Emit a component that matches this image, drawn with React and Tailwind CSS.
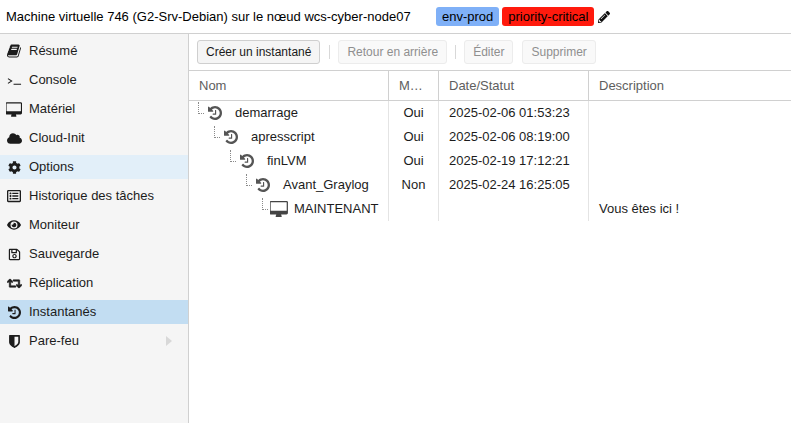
import React from 'react';
import { FaCloud, FaCog, FaRegListAlt, FaEye, FaRegSave, FaRetweet, FaPencilAlt } from 'react-icons/fa';

const historyPath = 'M1664 896q0 156-61 298t-164 245-245 164-298 61q-172 0-327-72.5t-264-204.5q-7-10-6.5-22.5t8.5-20.5l137-138q10-9 25-9 16 2 23 12 73 95 179 147t225 52q104 0 198.5-40.5t163.5-109.5 109.5-163.5 40.5-198.5-40.5-198.5-109.5-163.5-163.5-109.5-198.5-40.5q-98 0-188 35.5t-160 101.5l137 138q31 30 14 69-17 40-59 40h-448q-26 0-45-19t-19-45v-448q0-42 40-59 39-17 69 14l130 129q107-101 244.5-156.5t284.5-55.5q156 0 298 61t245 164 164 245 61 298zm-640-288v448q0 14-9 23t-23 9h-320q-14 0-23-9t-9-23v-64q0-14 9-23t23-9h224v-352q0-14 9-23t23-9h64q14 0 23 9t9 23z';
const shieldPath = 'M1344 960v-640h-448v1137q119-63 213-137 235-184 235-360zm192-768v768q0 86-33.5 170.5t-83 150-118 127.5-126.5 103-121 77.5-89.5 49.5-42.5 20q-12 6-26 6t-26-6q-16-7-42.5-20t-89.5-49.5-121-77.5-126.5-103-118-127.5-83-150-33.5-170.5v-768q0-26 19-45t45-19h1152q26 0 45 19t19 45z';
const bookPath = 'M1703 478q40 57 18 129l-275 906q-19 64-76.5 107.5t-122.5 43.5h-923q-77 0-148.5-53.5t-99.5-131.5q-24-67-2-127 0-4 3-27t4-37q1-8-3-21.5t-3-19.5q2-11 8-21t16.5-23.5 16.5-23.5q23-38 45-91.5t30-91.5q3-10 .5-30t-.5-28q3-11 17-28t17-23q21-36 42-92t25-90q1-9-2.5-32t.5-28q4-13 22-30.5t22-22.5q19-26 42.5-84.5t27.5-96.5q1-8-3-25.5t-2-26.5q2-8 9-18t18-23 17-21q8-12 16.5-30.5t15-35 16-36 19.5-32 26.5-23.5 36-11.5 47.5 5.5l-1 3q38-9 51-9h761q74 0 114 56t18 130l-274 906q-36 119-71.5 153.5t-128.5 34.5h-869q-27 0-38 15-11 16-1 43 24 70 144 70h923q29 0 56-15.5t35-41.5l300-987q7-22 5-57 38 15 59 43zm-1064 2q-4 13 2 22.5t20 9.5h608q13 0 25.5-9.5t16.5-22.5l21-64q4-13-2-22.5t-20-9.5h-608q-13 0-25.5 9.5t-16.5 22.5zm-83 256q-4 13 2 22.5t20 9.5h608q13 0 25.5-9.5t16.5-22.5l21-64q4-13-2-22.5t-20-9.5h-608q-13 0-25.5 9.5t-16.5 22.5z';
const desktopPath = 'M1728 992v-832q0-13-9.5-22.5t-22.5-9.5h-1600q-13 0-22.5 9.5t-9.5 22.5v832q0 13 9.5 22.5t22.5 9.5h1600q13 0 22.5-9.5t9.5-22.5zm128-832v1088q0 66-47 113t-113 47h-544q0 37 16 77.5t32 71 16 43.5q0 26-19 45t-45 19h-512q-26 0-45-19t-19-45q0-14 16-44t32-70 16-78h-544q-66 0-113-47t-47-113v-1088q0-66 47-113t113-47h1632q66 0 113 47t47 113z';

const HistoryIcon = ({ className }) => (
  <svg className={className} viewBox="128 128 1536 1536" fill="currentColor"><path d={historyPath} /></svg>
);
const ShieldIcon = ({ className }) => (
  <svg className={className} viewBox="128 128 1536 1536" fill="currentColor"><path d={shieldPath} /></svg>
);
const BookIcon = ({ className }) => (
  <svg className={className} viewBox="64 64 1664 1664" fill="currentColor"><path d={bookPath} /></svg>
);
const DesktopIcon = ({ className }) => (
  <svg className={className} viewBox="0 0 1856 1664" fill="currentColor"><path d={desktopPath} /></svg>
);
const ConsoleIcon = ({ className }) => (
  <svg className={className} viewBox="0 0 16 16" fill="none" stroke="currentColor" strokeWidth="1.1">
    <path d="M1 6l4 2.5L1 11" />
    <path d="M7 12h8" />
  </svg>
);

const menuItems = [
  { label: 'Résumé', icon: BookIcon, rowClass: '', iconClass: 'w-[14px] h-[14px]' },
  { label: 'Console', icon: ConsoleIcon, rowClass: '', iconClass: 'w-[15px] h-[15px]' },
  { label: 'Matériel', icon: DesktopIcon, rowClass: '', iconClass: 'w-[16px] h-[15px]' },
  { label: 'Cloud-Init', icon: FaCloud, rowClass: '', iconClass: 'w-[15px] h-[15px]' },
  { label: 'Options', icon: FaCog, rowClass: 'bg-[#e2eff9]', iconClass: 'w-[13px] h-[13px]' },
  { label: 'Historique des tâches', icon: FaRegListAlt, rowClass: '', iconClass: 'w-[14px] h-[14px]' },
  { label: 'Moniteur', icon: FaEye, rowClass: '', iconClass: 'w-[14px] h-[14px]' },
  { label: 'Sauvegarde', icon: FaRegSave, rowClass: '', iconClass: 'w-[13px] h-[13px]' },
  { label: 'Réplication', icon: FaRetweet, rowClass: '', iconClass: 'w-[15px] h-[15px] stroke-[24]' },
  { label: 'Instantanés', icon: HistoryIcon, rowClass: 'bg-[#c2ddf2]', iconClass: 'w-[13px] h-[13px]' },
  { label: 'Pare-feu', icon: ShieldIcon, rowClass: '', iconClass: 'w-[13px] h-[13px]', arrow: true }
];

const snapshots = [
  { name: 'demarrage', indent: 'pl-[9px]', ram: 'Oui', date: '2025-02-06 01:53:23', desc: '' },
  { name: 'apresscript', indent: 'pl-[25px]', ram: 'Oui', date: '2025-02-06 08:19:00', desc: '' },
  { name: 'finLVM', indent: 'pl-[41px]', ram: 'Oui', date: '2025-02-19 17:12:21', desc: '' },
  { name: 'Avant_Graylog', indent: 'pl-[57px]', ram: 'Non', date: '2025-02-24 16:25:05', desc: '' },
  { name: 'MAINTENANT', indent: 'pl-[73px]', ram: '', date: '', desc: 'Vous êtes ici !', current: true }
];

const ToolButton = ({ children, disabled }) => (
  <button
    className={
      disabled
        ? 'h-[24px] px-[8px] rounded-[3px] border border-[#ececec] bg-[#f9f9f9] text-[#8f8f8f] text-[12px]'
        : 'h-[24px] px-[8px] rounded-[3px] border border-[#cfcfcf] bg-[#f5f5f5] text-[#1a1a1a] text-[12px]'
    }
  >
    {children}
  </button>
);

const TreeLine = () => (
  <span className="w-[6px] h-[12px] -mt-[11px] mr-[4px] border-l border-b border-dotted border-[#8a8a8a] shrink-0" />
);

const App = () => {
  return (
    <div className="w-[791px] h-[423px] overflow-hidden bg-white flex flex-col font-['Liberation_Sans',Arial,sans-serif] text-[13px] text-[#1c1c1c]">
      <header className="h-[34px] shrink-0 border-b border-[#d0d0d0] flex items-center pl-[6px]">
        <span className="text-[13px] text-black w-[430px]">Machine virtuelle 746 (G2-Srv-Debian) sur le nœud wcs-cyber-node07</span>
        <span className="h-[19px] px-[6px] rounded-[3px] bg-[#7fb0f7] text-black text-[13px] leading-[19px]">env-prod</span>
        <span className="h-[19px] ml-[3px] px-[6px] rounded-[3px] bg-[#ff1a0d] text-black text-[13px] leading-[19px]">priority-critical</span>
        <FaPencilAlt className="ml-[4px] w-[12px] h-[12px] text-[#111]" />
      </header>
      <div className="flex flex-1 min-h-0">
        <aside className="w-[189px] shrink-0 bg-[#f5f5f5] border-r border-[#d0d0d0] pt-[5px]">
          {menuItems.map((item) => {
            const Icon = item.icon;
            return (
              <div key={item.label} className={`h-[24px] mb-[5px] flex items-center pl-[6px] text-[13px] text-[#1c1c1c] ${item.rowClass}`}>
                <span className="w-[16px] flex justify-center shrink-0 text-[#1c1c1c]">
                  <Icon className={item.iconClass} />
                </span>
                <span className="ml-[7px] flex-1">{item.label}</span>
                {item.arrow && <span className="mr-[16px] w-0 h-0 border-y-[5px] border-y-transparent border-l-[6px] border-l-[#d8d8d8]" />}
              </div>
            );
          })}
        </aside>
        <main className="flex-1 min-w-0 flex flex-col">
          <div className="h-[37px] shrink-0 border-b border-[#d0d0d0] flex items-center pl-[8px]">
            <ToolButton>Créer un instantané</ToolButton>
            <span className="w-px h-[14px] bg-[#d8d8d8] ml-[9px] mr-[8px]" />
            <ToolButton disabled>Retour en arrière</ToolButton>
            <span className="w-px h-[14px] bg-[#d8d8d8] mx-[8px]" />
            <ToolButton disabled>Éditer</ToolButton>
            <span className="w-[9px]" />
            <ToolButton disabled>Supprimer</ToolButton>
          </div>
          <div className="h-[30px] shrink-0 border-b border-[#d0d0d0] flex text-[#5e5e5e] text-[13px] leading-[29px]">
            <div className="w-[200px] pl-[10px] border-r border-[#d0d0d0]">Nom</div>
            <div className="w-[50px] pl-[10px] border-r border-[#d0d0d0]">M…</div>
            <div className="w-[150px] pl-[10px] border-r border-[#d0d0d0]">Date/Statut</div>
            <div className="flex-1 pl-[10px]">Description</div>
          </div>
          <div className="flex-1">
            {snapshots.map((row) => (
              <div key={row.name} className="h-[24px] flex text-[13px] text-[#1c1c1c]">
                <div className={`w-[200px] flex items-center border-r border-[#e4e4e4] ${row.indent}`}>
                  <TreeLine />
                  {row.current ? (
                    <DesktopIcon className="w-[18px] h-[16px] -ml-[2px] mr-[6px] text-[#444]" />
                  ) : (
                    <HistoryIcon className="w-[14px] h-[14px] mr-[13px] text-[#555]" />
                  )}
                  <span>{row.name}</span>
                </div>
                <div className="w-[50px] flex items-center justify-center border-r border-[#e4e4e4]">{row.ram}</div>
                <div className="w-[150px] flex items-center pl-[10px] border-r border-[#e4e4e4]">{row.date}</div>
                <div className="flex-1 flex items-center pl-[10px]">{row.desc}</div>
              </div>
            ))}
          </div>
        </main>
      </div>
    </div>
  );
};

export default App;
